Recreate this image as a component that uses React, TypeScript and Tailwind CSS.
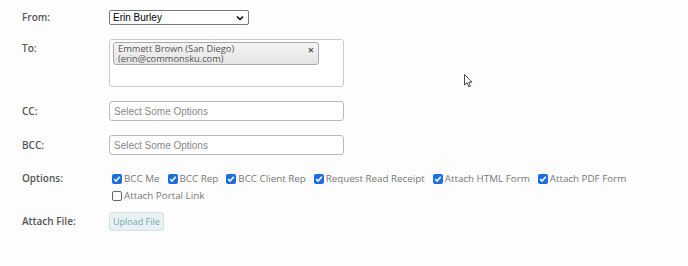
import React from "react";

const Check = ({ checked }: { checked: boolean }) =>
  checked ? (
    <span className="inline-flex items-center justify-center w-[10px] h-[10px] rounded-[2px] bg-[#1a6fe0] mr-[2px] shrink-0">
      <svg width="8" height="8" viewBox="0 0 8 8">
        <path d="M1.2 4.2 L3.1 6 L6.8 1.8" stroke="white" strokeWidth="1.6" fill="none" />
      </svg>
    </span>
  ) : (
    <span className="inline-block w-[10px] h-[10px] rounded-[2px] border border-[#666] bg-white mr-[2px] shrink-0" />
  );

const Opt = ({ label, checked = true }: { label: string; checked?: boolean }) => (
  <span className="inline-flex items-center mr-[8px]">
    <Check checked={checked} />
    <span>{label}</span>
  </span>
);

export default function App() {
  const labelCls = "w-[87px] shrink-0 text-[10px] font-semibold text-[#555]";
  return (
    <div
      className="w-[688px] h-[266px] bg-[#fdfdfd] relative overflow-hidden"
      style={{ fontFamily: '"Open Sans", sans-serif' }}
    >
      <div className="pl-[22px] pt-[10px] flex flex-col">
        {/* From */}
        <div className="flex items-center h-[15px]">
          <div className={labelCls}>From:</div>
          <div
            className="w-[140px] h-[15px] border border-[#767676] rounded-[2px] bg-white flex items-center justify-between pl-[3px] pr-[4px] text-[10px] text-black"
            style={{ fontFamily: '"Liberation Sans", Arial, sans-serif' }}
          >
            <span>Erin Burley</span>
            <svg width="8" height="6" viewBox="0 0 8 6">
              <path d="M1 1.5 L4 4.5 L7 1.5" stroke="black" strokeWidth="1.5" fill="none" />
            </svg>
          </div>
        </div>
        {/* To */}
        <div className="flex mt-[14px]">
          <div className={labelCls + " pt-[2px]"}>To:</div>
          <div className="w-[235px] h-[48px] border border-[#ccc] rounded-[3px] bg-white pl-[3px] pt-[2px]">
            <div className="w-[206px] h-[23px] border border-[#aaa] rounded-[3px] bg-gradient-to-b from-[#f4f4f4] to-[#e4e4e4] relative pl-[4px] pt-[1px] text-[9.3px] leading-[10px] text-[#555]">
              <div>Emmett Brown (San Diego)</div>
              <div>(erin@commonsku.com)</div>
              <span className="absolute right-[4px] top-[1px] text-[11px] font-bold text-[#555] leading-[11px]">×</span>
            </div>
          </div>
        </div>
        {/* CC */}
        <div className="flex items-center mt-[14px]">
          <div className={labelCls}>CC:</div>
          <div
            className="w-[235px] h-[20px] border border-[#bbb] rounded-[3px] bg-white pl-[4px] flex items-center text-[10px] text-[#888]"
            style={{ fontFamily: '"Liberation Sans", Arial, sans-serif' }}
          >
            Select Some Options
          </div>
        </div>
        {/* BCC */}
        <div className="flex items-center mt-[14px]">
          <div className={labelCls}>BCC:</div>
          <div
            className="w-[235px] h-[20px] border border-[#bbb] rounded-[3px] bg-white pl-[4px] flex items-center text-[10px] text-[#888]"
            style={{ fontFamily: '"Liberation Sans", Arial, sans-serif' }}
          >
            Select Some Options
          </div>
        </div>
        {/* Options */}
        <div className="flex mt-[15px]">
          <div className={labelCls + " pt-[1px]"}>Options:</div>
          <div className="pl-[3px] w-[560px] flex flex-wrap text-[9.8px] text-[#777] leading-[17px]">
            <Opt label="BCC Me" />
            <Opt label="BCC Rep" />
            <Opt label="BCC Client Rep" />
            <Opt label="Request Read Receipt" />
            <Opt label="Attach HTML Form" />
            <Opt label="Attach PDF Form" />
            <div className="w-full" />
            <Opt label="Attach Portal Link" checked={false} />
          </div>
        </div>
        {/* Attach */}
        <div className="flex items-center mt-[8px]">
          <div className={labelCls}>Attach File:</div>
          <div className="h-[19px] px-[3px] border border-[#cfe0e6] rounded-[3px] bg-[#e8f1f4] flex items-center text-[9px] text-[#7fa3b5]">
            Upload File
          </div>
        </div>
      </div>
      {/* cursor */}
      <svg className="absolute left-[464px] top-[74px]" width="10" height="14" viewBox="0 0 10 14">
        <path d="M0.5 0.5 L0.5 11 L3 8.8 L4.8 12.8 L6.4 12.1 L4.7 8.2 L8 8.2 Z" fill="white" stroke="#333" strokeWidth="0.9" />
      </svg>
    </div>
  );
}
